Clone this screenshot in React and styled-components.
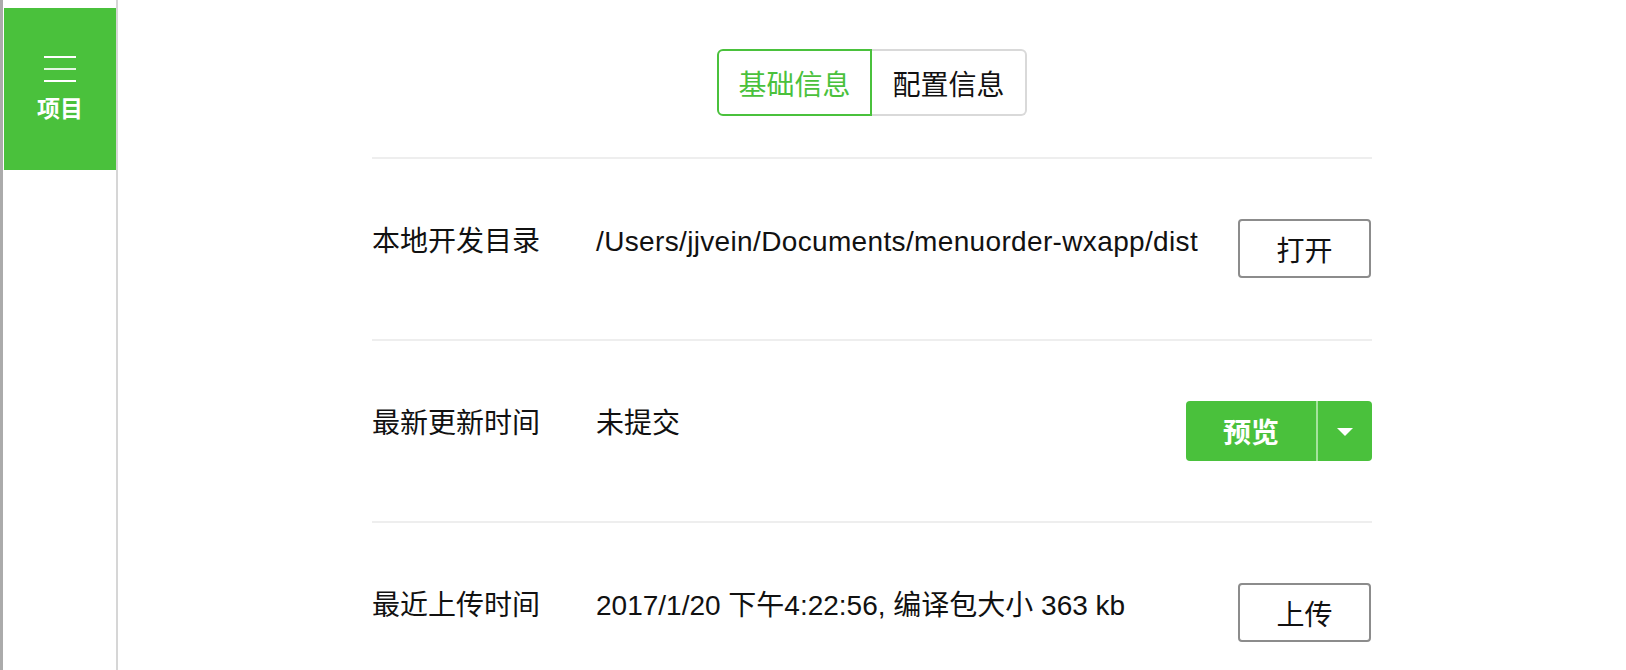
import React from "react";
import styled, { createGlobalStyle } from "styled-components";

const green = "#4ac13c";

const GlobalStyle = createGlobalStyle`
  html, body {
    margin: 0;
    padding: 0;
    background: #fff;
  }
  body {
    font-family: "Liberation Sans", "Noto Sans CJK SC", sans-serif;
    color: #111;
  }
`;

const Page = styled.div`
  display: flex;
  height: 100vh;
  overflow: hidden;
`;

const Sidebar = styled.nav`
  width: 112px;
  flex-shrink: 0;
  border-left: 3px solid #ababab;
  padding-left: 1px;
  border-right: 2px solid #d6d6d6;
  padding-top: 8px;
`;

const NavItem = styled.div`
  height: 162px;
  background: ${props => (props.active ? green : "transparent")};
  color: #fff;
  display: flex;
  flex-direction: column;
  align-items: center;
  justify-content: center;
  gap: 12px;
  padding-bottom: 2px;
  box-sizing: border-box;
`;

const NavLabel = styled.span`
  font-family: "Noto Sans CJK SC", sans-serif;
  font-size: 23px;
  font-weight: 700;
  line-height: 26px;
`;

const Main = styled.main`
  flex: 1;
  display: flex;
  justify-content: center;
  padding-top: 49px;
`;

const Content = styled.div`
  width: 1000px;
`;

const Tabs = styled.div`
  display: flex;
  justify-content: center;
  margin-bottom: 41px;
`;

const Tab = styled.div`
  width: 155px;
  height: 67px;
  box-sizing: border-box;
  display: flex;
  align-items: center;
  justify-content: center;
  font-size: 28px;
  color: ${props => (props.active ? green : "#111")};
  border: 2px solid ${props => (props.active ? green : "#d9d9d9")};
  ${props => (props.first ? "border-radius: 6px 0 0 6px;" : "border-left: none; border-radius: 0 6px 6px 0;")}
`;

const Row = styled.div`
  display: flex;
  align-items: flex-start;
  height: 182px;
  box-sizing: border-box;
  border-top: 2px solid #eeeeee;
  padding-top: 60px;
`;

const Label = styled.div`
  width: 224px;
  flex-shrink: 0;
  font-size: 28px;
  line-height: 40px;
  padding-top: 3px;
`;

const Value = styled.div`
  flex: 1;
  font-size: 28px;
  line-height: 40px;
  padding-top: 3px;
  white-space: nowrap;
  letter-spacing: ${props => props.spacing || 0};
`;

const Button = styled.button`
  width: 133px;
  height: 59px;
  box-sizing: border-box;
  border: 2px solid #8c8c8c;
  border-radius: 4px;
  background: #fff;
  font-family: inherit;
  font-size: 28px;
  color: #111;
  padding: 0;
  margin-right: 1px;
`;

const SplitButton = styled.div`
  display: flex;
  width: 186px;
  height: 60px;
  border-radius: 4px;
  background: ${green};
  overflow: hidden;
`;

const SplitMain = styled.div`
  width: 130px;
  display: flex;
  align-items: center;
  justify-content: center;
  color: #fff;
  font-family: "Noto Sans CJK SC", sans-serif;
  font-size: 28px;
  font-weight: 700;
  border-right: 2px solid #a5e39d;
`;

const SplitArrow = styled.div`
  flex: 1;
  display: flex;
  align-items: center;
  justify-content: center;
`;

const Caret = styled.span`
  width: 0;
  height: 0;
  border-left: 8px solid transparent;
  border-right: 8px solid transparent;
  border-top: 8px solid #fff;
  margin-top: 2px;
`;

const MenuIcon = () => (
  <svg width="32" height="26" viewBox="0 0 32 26">
    <rect x="0" y="0" width="32" height="2" fill="#fff" />
    <rect x="0" y="12" width="32" height="2" fill="#fff" opacity="0.85" />
    <rect x="0" y="24" width="32" height="2" fill="#fff" />
  </svg>
);

export default function App() {
  return (
    <Page>
      <GlobalStyle />
      <Sidebar>
        <NavItem active>
          <MenuIcon />
          <NavLabel>项目</NavLabel>
        </NavItem>
      </Sidebar>
      <Main>
        <Content>
          <Tabs>
            <Tab active first>基础信息</Tab>
            <Tab>配置信息</Tab>
          </Tabs>
          <Row>
            <Label>本地开发目录</Label>
            <Value spacing="0.35px">/Users/jjvein/Documents/menuorder-wxapp/dist</Value>
            <Button>打开</Button>
          </Row>
          <Row>
            <Label>最新更新时间</Label>
            <Value>未提交</Value>
            <SplitButton>
              <SplitMain>预览</SplitMain>
              <SplitArrow>
                <Caret />
              </SplitArrow>
            </SplitButton>
          </Row>
          <Row>
            <Label>最近上传时间</Label>
            <Value>2017/1/20 下午4:22:56, 编译包大小 363 kb</Value>
            <Button>上传</Button>
          </Row>
        </Content>
      </Main>
    </Page>
  );
}
